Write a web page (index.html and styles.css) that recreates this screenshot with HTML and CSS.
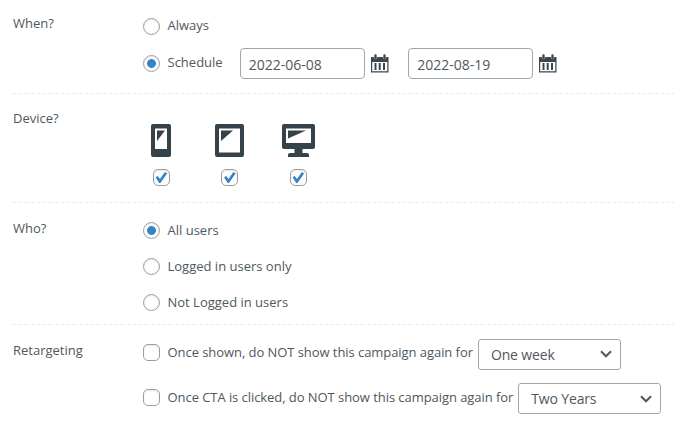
FILE: index.html
```html
<!DOCTYPE html>
<html lang="en">
<head>
<meta charset="utf-8">
<title>Campaign display</title>
<link rel="stylesheet" href="styles.css">
</head>

<body>
<svg class="defs">
  <symbol id="calendar" viewBox="0 0 18 19">
    <path fill="#3c464e" fill-rule="evenodd" d="M0 3H17.500V18.500H0ZM1.200 8V17.300H16.300V8Z"/>
    <path fill="#3c464e" d="M3.500 9h2v7h-2zM7.700 9h2v7h-2zM12 9h2v7h-2z"/>
    <path stroke="#fff" stroke-width="3.400" stroke-linecap="round" d="M4.500 2v1.500M13.500 2v1.500"/>
    <path stroke="#3c464e" stroke-width="2.400" stroke-linecap="round" d="M4.500 1.400v2.600M13.500 1.400v2.600"/>
  </symbol>
  <symbol id="arrow" viewBox="0 0 12 8">
    <path fill="none" stroke="#50575e" stroke-width="2" d="M1 1.300l5 5 5-5"/>
  </symbol>
</svg>
<form class="box">
  <div class="row when">
    <div class="title">When?</div>
    <div class="list">
      <label class="item"><input type="radio" name="when"><span>Always</span></label>
      <div class="item">
        <input type="radio" name="when" id="schedule" checked>
        <label for="schedule">Schedule</label>
        <input type="text" class="date from" value="2022-06-08">
        <svg class="cal"><use href="#calendar"/></svg>
        <input type="text" class="date to" value="2022-08-19">
        <svg class="cal"><use href="#calendar"/></svg>
      </div>
    </div>
  </div>

  <div class="row device">
    <div class="title">Device?</div>
    <div class="devices">
      <label>
        <svg width="20" height="33" viewBox="0 0 20 33"><path fill="#36424a" fill-rule="evenodd" d="M2 0H18Q20 0 20 2V31Q20 33 18 33H2Q0 33 0 31V2Q0 0 2 0ZM4 4.500V25H16V4.500Z"/><path fill="#36424a" d="M6 6.500h8L6 17z"/></svg>
        <input type="checkbox" checked>
      </label>
      <label>
        <svg width="29" height="33" viewBox="0 0 29 33"><path fill="#36424a" fill-rule="evenodd" d="M2 0H27Q29 0 29 2V31Q29 33 27 33H2Q0 33 0 31V2Q0 0 2 0ZM4 4.500V28.500H25V4.500Z"/><path fill="#36424a" d="M6 6.500h12L6 17z"/></svg>
        <input type="checkbox" checked>
      </label>
      <label>
        <svg width="33" height="33" viewBox="0 0 33 33"><path fill="#36424a" fill-rule="evenodd" d="M2 0H31Q33 0 33 2V23Q33 25 31 25H20.500V29H25Q27 29 27 31V33H6V31Q6 29 8 29H12.500V25H2Q0 25 0 23V2Q0 0 2 0ZM4 4.500V19H29V4.500Z"/><path fill="#36424a" d="M6 6.500h18L6 14.500z"/></svg>
        <input type="checkbox" checked>
      </label>
    </div>
  </div>

  <div class="row who">
    <div class="title">Who?</div>
    <div class="list">
      <label class="item"><input type="radio" name="who" checked><span>All users</span></label>
      <label class="item"><input type="radio" name="who"><span>Logged in users only</span></label>
      <label class="item"><input type="radio" name="who"><span>Not Logged in users</span></label>
    </div>
  </div>

  <div class="row retargeting">
    <div class="title">Retargeting</div>
    <div class="list">
      <div class="item">
        <input type="checkbox" id="shown">
        <label for="shown">Once shown, do NOT show this campaign again for</label>
        <div class="select"><select><option>One week</option></select><svg><use href="#arrow"/></svg></div>
      </div>
      <div class="item">
        <input type="checkbox" id="clicked">
        <label for="clicked">Once CTA is clicked, do NOT show this campaign again for</label>
        <div class="select"><select><option>Two Years</option></select><svg><use href="#arrow"/></svg></div>
      </div>
    </div>
  </div>
</form>
</body>
</html>
```
FILE: styles.css
```css
*{margin:0;padding:0;box-sizing:border-box;}
body{background:#fff;color:#50575e;font:13px/18px "Open Sans","Noto Sans",sans-serif;overflow:hidden;}
input,select{font:inherit;color:inherit;}
svg{display:block;flex:none;}
.defs{width:0;height:0;}

.box{width:661px;margin-left:13px;}
.row{display:flex;background:repeating-linear-gradient(90deg,#e9eaea 0,#e9eaea 3px,transparent 3px,transparent 4.800px) left bottom/100% 1.500px no-repeat;}
.title{width:130px;flex:none;padding-top:14px;}
.item{display:flex;align-items:center;height:36px;white-space:nowrap;}
.item span,.item label{margin-left:7.500px;position:relative;top:-1px;}

.when{height:94px;}
.when .list{padding-top:8px;}
.when .item + .item{margin-top:1px;}
.device{height:109px;}
.device .title{padding-top:15px;}
.who{height:122px;}
.who .title{padding-top:16px;}
.who .list{padding-top:9.500px;}
.retargeting{background:none;}
.retargeting .title{padding-top:16px;}
.retargeting .list{padding-top:6px;}
.retargeting .item{height:44.500px;}
.retargeting .item input{margin-bottom:1px;}
.retargeting .item label{letter-spacing:-.06px;}

input[type=radio],input[type=checkbox]{-webkit-appearance:none;appearance:none;flex:none;width:17px;height:17px;border:1px solid #9a9fa4;background:#fff;box-shadow:inset 0 1px 2px rgba(0,0,0,.1);}
input[type=radio]{border-radius:50%;}
input[type=radio]:checked{background:radial-gradient(circle,#3582c4 4px,#fff 4.800px);}
input[type=checkbox]{border-radius:5px;}
input[type=checkbox]:checked{display:grid;place-items:center;}
input[type=checkbox]:checked:before{content:"";width:13px;height:12px;background:#3582c4;clip-path:polygon(8% 48%,25% 38%,42% 62%,80% 5%,97% 16%,46% 96%,36% 96%);}

.date{width:125px;height:31px;border:1px solid #a3a7ab;border-radius:4px;padding:2px 8px 0;font-size:14px;}
.from{margin-left:17px;}
.to{margin-left:19.500px;}
.cal{width:18px;height:19px;margin-left:6px;}

.devices{display:flex;padding:30px 0 0 1px;}
.devices label{display:flex;flex-direction:column;align-items:center;width:34px;margin-right:34.500px;}
.devices input{margin-top:12px;}

.select{display:flex;align-items:center;width:143px;height:31px;margin:2px 0 0 5px;padding:0 8px 0 12px;border:1px solid #a3a7ab;border-radius:3px;}
.select select{-webkit-appearance:none;appearance:none;flex:1;height:29px;padding-top:1px;border:0;background:none;font-size:14px;letter-spacing:-.15px;}
.select svg{width:12px;height:8px;}
```
